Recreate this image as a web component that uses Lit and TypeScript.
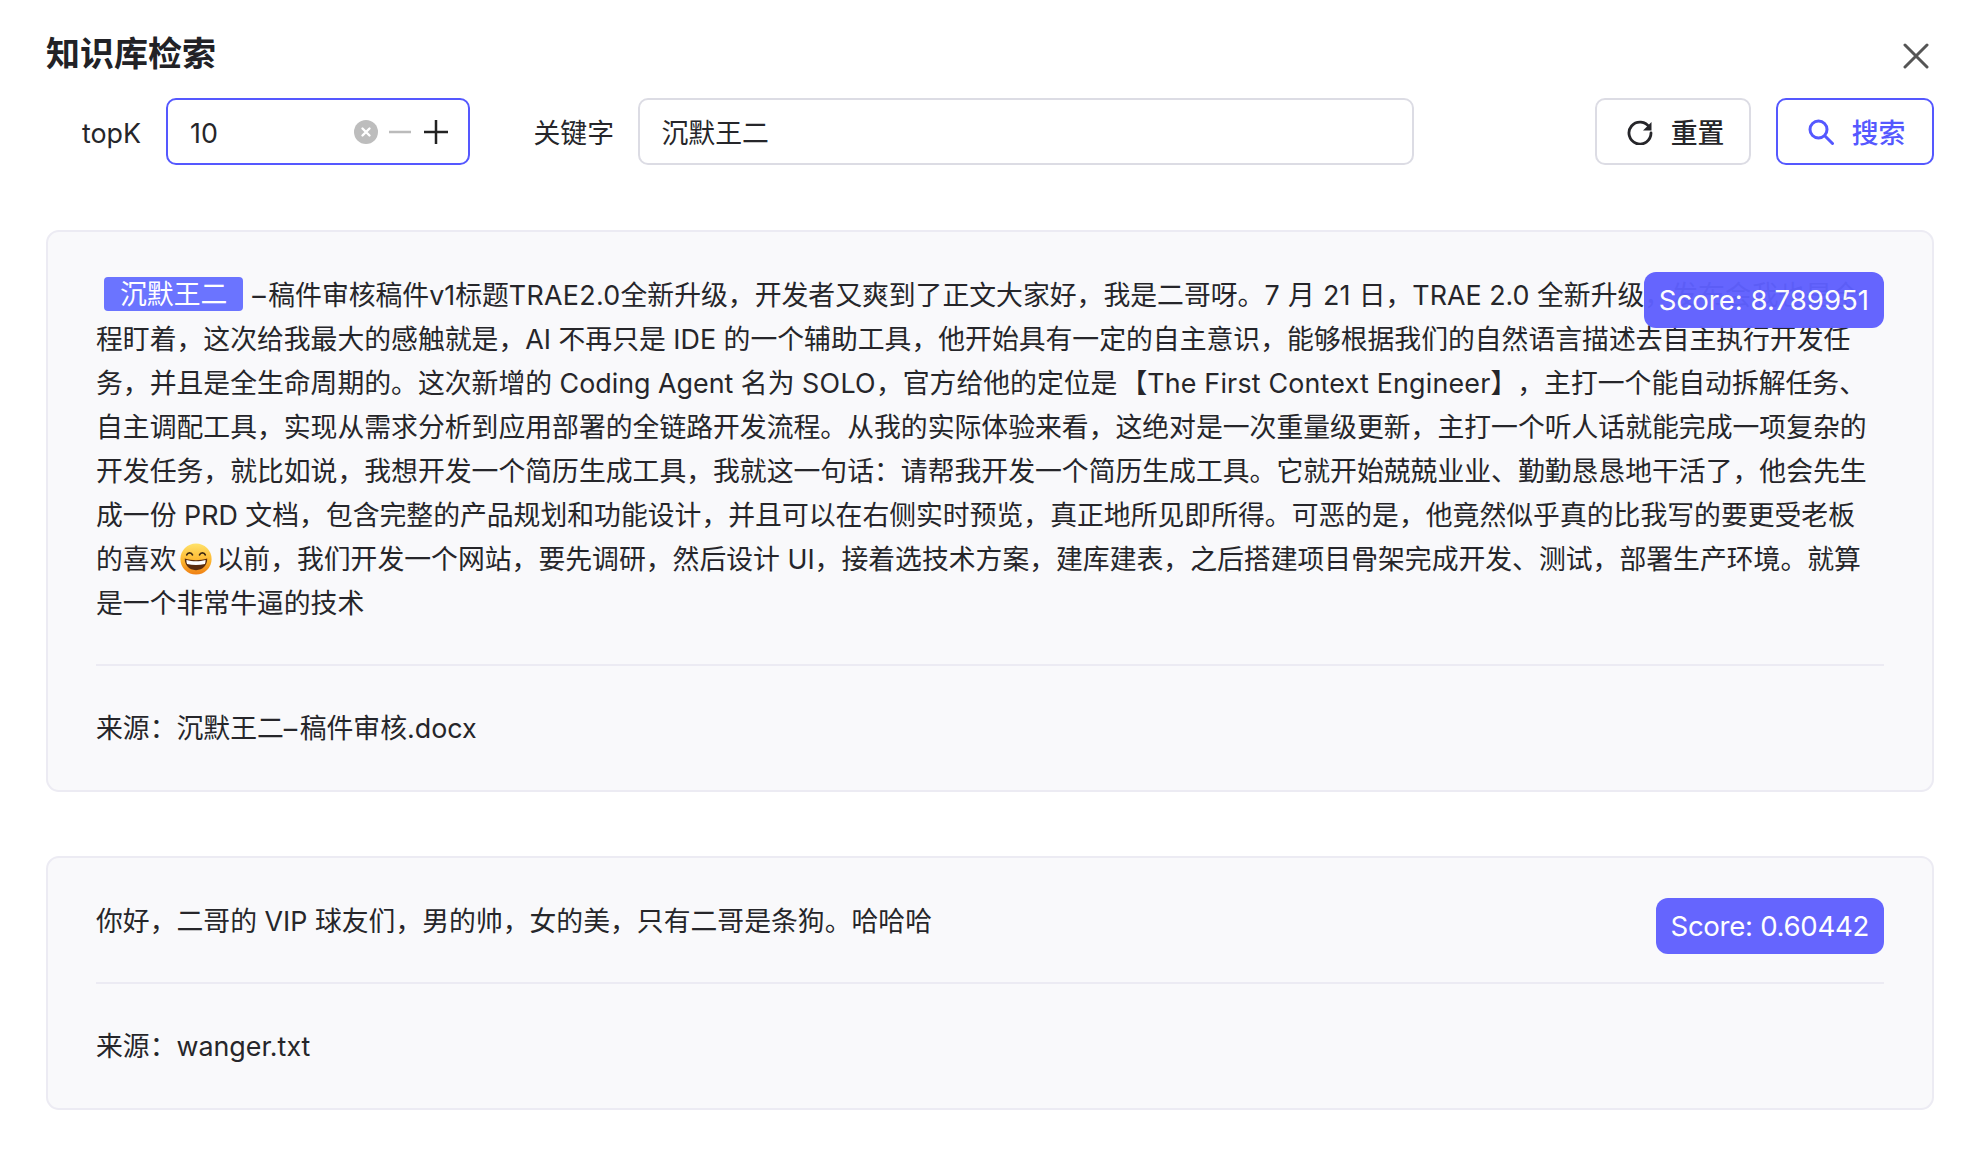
import { LitElement, html, css } from "lit";
import { customElement } from "lit/decorators.js";

const emoji = html`<svg class="emoji" viewBox="0 0 32 32" aria-hidden="true">
  <defs>
    <linearGradient id="face" x1="0" y1="0" x2="0" y2="1">
      <stop offset="0" stop-color="#ffe36b"></stop>
      <stop offset="0.55" stop-color="#fdb72f"></stop>
      <stop offset="1" stop-color="#ef7f14"></stop>
    </linearGradient>
  </defs>
  <circle cx="16" cy="16" r="15.6" fill="url(#face)"></circle>
  <path d="M6.8 11.8c1-2.6 4.6-2.6 5.6 0M19.6 11.8c1-2.6 4.6-2.6 5.6 0" fill="none" stroke="#3f2a12" stroke-width="1.8" stroke-linecap="round"></path>
  <path d="M4.8 15.6c3.6 1.2 7.2 1.7 11.2 1.7s7.6-.5 11.2-1.7c.3 6.6-4.4 11.6-11.2 11.6S4.5 22.2 4.8 15.6z" fill="#5b2c0e"></path>
  <path d="M6.4 17c3.2.9 6.200 1.300 9.600 1.300s6.400-.4 9.600-1.300c0 1.600-.2 2.800-.7 4-2.900.7-5.800 1-8.900 1s-6-.3-8.900-1c-.5-1.200-.7-2.400-.7-4z" fill="#fff"></path>
</svg>`;

const lines = [
  html`<mark class="hit">沉默王二</mark><span class="dash">–</span>稿件审核稿件v1标题<span class="sp">TRAE2.0</span>全新升级，开发者又爽到了正文大家好，我是二哥呀。<span class="ws">7 月 21 日</span>，TRAE 2.0 全新升级，发布会我也是全`,
  html`程盯着，这次给我最大的感触就是，AI 不再只是 IDE 的一个辅助工具，他开始具有一定的自主意识，能够根据我们的自然语言描述去自主执行开发任`,
  html`务，并且是全生命周期的。这次新增的 Coding Agent 名为 <span class="sp">SOLO</span>，官方给他的定位是<span class="open">【</span><span class="sl">The First Context Engineer</span>】，主打一个能自动拆解任务、`,
  html`自主调配工具，实现从需求分析到应用部署的全链路开发流程。从我的实际体验来看，这绝对是一次重量级更新，主打一个听人话就能完成一项复杂的`,
  html`开发任务，就比如说，我想开发一个简历生成工具，我就这一句话：请帮我开发一个简历生成工具。它就开始兢兢业业、勤勤恳恳地干活了，他会先生`,
  html`成一份 PRD 文档，包含完整的产品规划和功能设计，并且可以在右侧实时预览，真正地所见即所得。可恶的是，他竟然似乎真的比我写的要更受老板`,
  html`的喜欢${emoji}以前，我们开发一个网站，要先调研，然后设计 UI，接着选技术方案，建库建表，之后搭建项目骨架完成开发、测试，部署生产环境。就算`,
  html`是一个非常牛逼的技术`,
];

@customElement("app-root")
export class AppRoot extends LitElement {
  static styles = css`
    :host {
      display: block;
      min-height: 1168px;
      background: #fff;
      color: #26262a;
      font-family: Inter, "Noto Sans CJK SC", sans-serif;
      font-size: 26.84px;
      line-height: 44px;
      text-spacing-trim: space-all;
    }
    .page {
      padding: 32px 32px 0 46px;
    }
    .head {
      display: flex;
      justify-content: space-between;
      align-items: center;
      height: 44px;
    }
    h1 {
      margin: 0;
      font-size: 34px;
      font-weight: 600;
      line-height: 44px;
      color: #222226;
    }
    .close {
      width: 26px;
      height: 26px;
      display: block;
      margin-right: 5px;
      margin-top: 3px;
    }
    .form {
      display: flex;
      align-items: center;
      height: 67px;
      margin: 22px 0 65px;
      padding-left: 36px;
    }
    .label {
      white-space: nowrap;
      padding-top: 2px;
    }
    .label.k {
      width: 84px;
    }
    .label.g {
      width: 104px;
    }
    .field {
      box-sizing: border-box;
      height: 67px;
      display: flex;
      align-items: center;
      border: 2px solid #dcdce4;
      border-radius: 10px;
      padding: 2px 22px 0;
      background: #fff;
    }
    .num {
      width: 304px;
      margin-right: 63.500px;
      border: 2.5px solid #5558ff;
      padding: 0 20px 0 22px;
    }
    .num .val {
      flex: 1;
      padding-top: 2px;
    }
    .num svg {
      display: block;
      flex: none;
    }
    .clear {
      width: 24px;
      height: 24px;
      margin-right: 10px;
    }
    .step {
      width: 24px;
      height: 24px;
    }
    .step.minus {
      margin-right: 12px;
    }
    .kw {
      width: 776px;
    }
    .spacer {
      flex: 1;
    }
    .btn {
      box-sizing: border-box;
      height: 67px;
      display: flex;
      align-items: center;
      justify-content: center;
      gap: 18px;
      border: 2px solid #dcdce4;
      border-radius: 10px;
      background: #fff;
      font-weight: 500;
      white-space: nowrap;
    }
    .btn span {
      padding-top: 2px;
    }
    .btn svg {
      display: block;
      width: 26px;
      height: 26px;
    }
    .reset {
      width: 156px;
      margin-right: 25px;
      padding-left: 5px;
    }
    .search {
      width: 158px;
      border: 2.5px solid #5558ff;
      color: #5558ff;
      padding-left: 3px;
    }
    .card {
      position: relative;
      border: 2px solid #ecebf3;
      border-radius: 13px;
      background: #f9f9fb;
      padding: 40px 48px;
      margin-bottom: 64px;
    }
    .text {
      white-space: nowrap;
      padding-top: 1px;
    }
    .hit {
      display: inline-block;
      height: 34px;
      line-height: 34px;
      vertical-align: 1px;
      margin: 0 9px 0 8px;
      padding: 0 16px;
      border-radius: 4px;
      background: #6b74ff;
      color: #fff;
    }
    .dash {
      letter-spacing: 2.5px;
    }
    .sp {
      letter-spacing: 0.3px;
    }
    .sl {
      letter-spacing: 0.2px;
    }
    .ws {
      word-spacing: 0.8px;
    }
    .open {
      margin-left: 3px;
    }
    .emoji {
      display: inline-block;
      width: 32px;
      height: 32px;
      margin: 0 4px;
      vertical-align: -6px;
    }
    .rule {
      height: 2px;
      background: #ecebf3;
      margin: 39px 0 40px;
    }
    .source {
      white-space: nowrap;
    }
    .src-dash {
      letter-spacing: 2.5px;
    }
    .score {
      position: absolute;
      top: 40px;
      right: 48px;
      height: 56px;
      line-height: 56px;
      padding: 0 15px;
      border-radius: 12px;
      background: #5f60ff;
      opacity: 0.96;
      color: #fff;
      white-space: nowrap;
      font-size: 27.6px;
    }
    .score.tight {
      letter-spacing: -0.3px;
    }
  `;

  render() {
    return html`<div class="page" lang="zh-CN">
      <div class="head">
        <h1>知识库检索</h1>
        <svg class="close" viewBox="0 0 26 26" fill="none" stroke="#555" stroke-width="3" stroke-linecap="round">
          <path d="M2 2l22 22M24 2L2 24"></path>
        </svg>
      </div>
      <div class="form">
        <span class="label k">topK</span>
        <div class="field num">
          <span class="val">10</span>
          <svg class="clear" viewBox="0 0 24 24">
            <circle cx="12" cy="12" r="12" fill="#bdbdbd"></circle>
            <path d="M8.500 8.500l7 7M15.500 8.500l-7 7" stroke="#fff" stroke-width="2.400" stroke-linecap="round"></path>
          </svg>
          <svg class="step minus" viewBox="0 0 24 24">
            <path d="M1 12h22" stroke="#bbb" stroke-width="2.500"></path>
          </svg>
          <svg class="step" viewBox="0 0 24 24">
            <path d="M0 12h24M12 0v24" stroke="#222" stroke-width="2.500"></path>
          </svg>
        </div>
        <span class="label g">关键字</span>
        <div class="field kw">沉默王二</div>
        <div class="spacer"></div>
        <div class="btn reset">
          <svg viewBox="0 0 26 26" fill="none">
            <path d="M22.500 8.500A11 11 0 1 0 24 14" stroke="#26262a" stroke-width="2.800" stroke-linecap="round"></path>
            <path d="M24.500 3v8.500h-8.500z" fill="#26262a"></path>
          </svg>
          <span>重置</span>
        </div>
        <div class="btn search">
          <svg viewBox="0 0 26 26" fill="none" stroke="#5558ff" stroke-width="3" stroke-linecap="round">
            <circle cx="10.500" cy="10.500" r="8.500"></circle>
            <path d="M17 17l7.500 7.500"></path>
          </svg>
          <span>搜索</span>
        </div>
      </div>
      <div class="card">
        <div class="text">${lines.map((l, i) => html`${i ? html`<br />` : ""}${l}`)}</div>
        <div class="score">Score: 8.789951</div>
        <div class="rule"></div>
        <div class="source">来源：沉默王二<span class="src-dash">–</span>稿件审核.docx</div>
      </div>
      <div class="card">
        <div class="text">你好，二哥的 VIP 球友们，男的帅，女的美，只有二哥是条狗。哈哈哈</div>
        <div class="score tight">Score: 0.60442</div>
        <div class="rule"></div>
        <div class="source">来源：wanger.txt</div>
      </div>
    </div>`;
  }
}
